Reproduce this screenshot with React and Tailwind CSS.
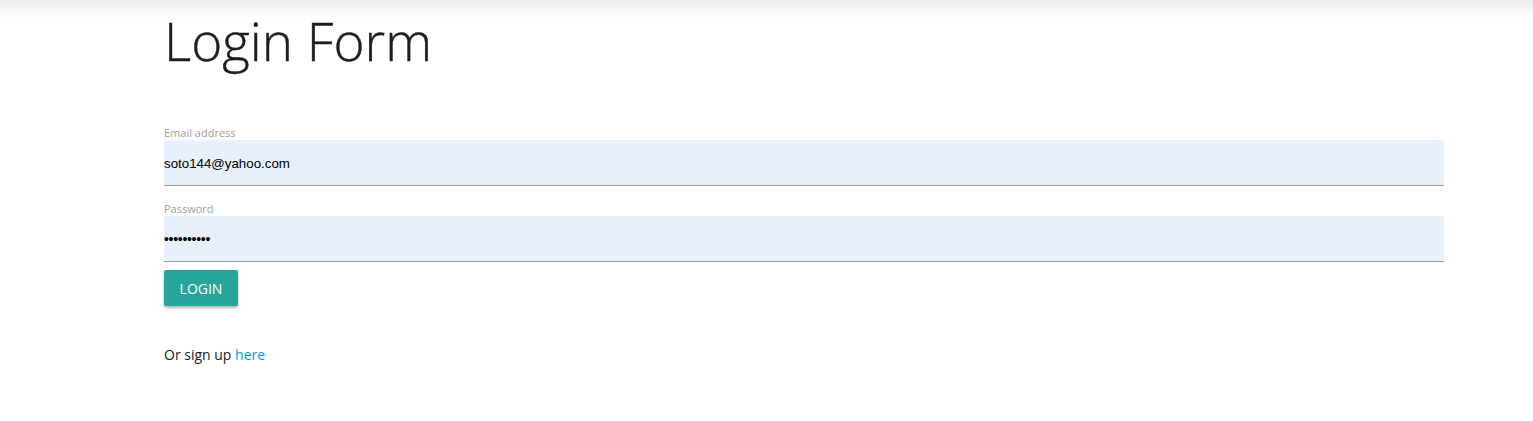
export default function App() {
  return (
    <div className="min-h-[421px] bg-white font-['Open_Sans',sans-serif]">
      {/* navbar shadow */}
      <div className="h-[18px] bg-gradient-to-b from-[#ececec] to-white"></div>

      <div className="ml-[164px] w-[1280px]">
        <h1 className="text-[53px] leading-[56px] font-light text-[#1e1e1e] -mt-[5px] [-webkit-text-stroke:0.4px_#1e1e1e]">Login Form</h1>

        <form className="mt-[57px]">
          <label className="block text-[11px] leading-[14px] text-[#9e9e9e]">Email address</label>
          <div className="h-[46px] bg-[#e8f0fe] border-b border-[#9e9e9e] flex items-center pt-[2px]">
            <span className="text-[13.3px] text-black font-['Liberation_Sans',sans-serif]">soto144@yahoo.com</span>
          </div>

          <label className="block mt-[16px] text-[11px] leading-[14px] text-[#9e9e9e]">Password</label>
          <div className="h-[46px] bg-[#e8f0fe] border-b border-[#9e9e9e] flex items-center pt-[2px]">
            <span className="text-[14px] text-black font-['Liberation_Sans',sans-serif] tracking-[-0.3px]">••••••••••</span>
          </div>

          <button
            type="button"
            className="mt-[8px] h-[36px] w-[74px] rounded-[2px] bg-[#26a69a] text-white text-[14px] uppercase shadow-[0_2px_3px_rgba(0,0,0,0.3)]"
          >
            Login
          </button>
        </form>

        <p className="mt-[38px] text-[14px] text-[#212121]">
          Or sign up <a className="text-[#039be5]">here</a>
        </p>
      </div>
    </div>
  )
}
